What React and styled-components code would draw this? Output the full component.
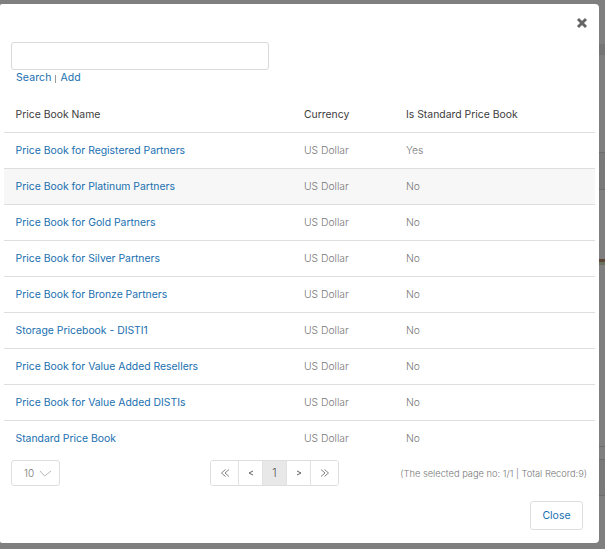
import React from 'react'
import styled, { createGlobalStyle } from 'styled-components'

const GlobalStyle = createGlobalStyle`
    html, body {
        margin: 0;
        padding: 0;
        background: #7f7f7f;
    }

    body {
        font-family: "Inter", "Liberation Sans", sans-serif;
    }
`

const Backdrop = styled.div`
    width: 605px;
    height: 549px;
    display: flex;
    background: #7f7f7f;
    overflow: hidden;
`

const ModalArea = styled.div`
    width: 599px;
    padding: 4px 0 6px;
    box-sizing: border-box;
`

// what shows of the page behind the dialog
const PageBehind = styled.div`
    width: 6px;
    display: flex;
    flex-direction: column;
`

const Band = styled.div`
    height: ${props => props.$height}px;
    background: ${props => props.$color};
`

const Modal = styled.div`
    position: relative;
    height: 539px;
    background: #ffffff;
    border-radius: 2px 4px 4px 2px;
    display: flex;
    flex-direction: column;
    padding: 38px 4px 0 4px;
    box-sizing: border-box;
`

const CloseIcon = styled.button`
    position: absolute;
    top: 13px;
    right: 11px;
    width: 12px;
    height: 12px;
    padding: 0;
    border: none;
    background: none;
    display: flex;
`

const SearchBlock = styled.div`
    padding-left: 7px;
    height: 55px;
`

const SearchInput = styled.input`
    display: block;
    box-sizing: border-box;
    width: 258px;
    height: 28px;
    border: 1px solid #d9d9d9;
    border-radius: 3px;
    background: #fff;
    margin: 0;
`

const SearchLinks = styled.div`
    display: flex;
    align-items: center;
    font-size: 10.5px;
    line-height: 14px;
    padding: 1px 0 0 5px;
    letter-spacing: 0.1px;
`

const Separator = styled.span`
    width: 1px;
    height: 8px;
    margin: 2px 4px 0 4px;
    background: #999;
`

const Link = styled.a`
    color: #1a6fb0;
    text-decoration: none;
`

const Table = styled.div`
    display: flex;
    flex-direction: column;
`

const Row = styled.div`
    display: grid;
    grid-template-columns: 288.5px 102px 1fr;
    height: 36px;
    box-sizing: border-box;
    align-items: center;
    padding-left: 11.5px;
    font-size: 10.3px;
    background: ${props => props.$striped ? '#f7f7f7' : '#fff'};
    border-bottom: 1px solid ${props => props.$last ? 'transparent' : '#dedede'};
`

const HeaderCell = styled.div`
    color: #3c3c3c;
    font-size: 10.4px;
`

const NameCell = styled(Link)`
    font-size: 10.4px;
`

const TextCell = styled.div`
    color: #777;
    font-weight: 300;
    padding-bottom: 2px;
`

const Footer = styled.div`
    display: grid;
    grid-template-columns: 199px 129px 1fr;
    align-items: center;
    height: 26px;
    margin-top: 3px;
    padding-left: 7px;
`

const PageSize = styled.div`
    width: 49px;
    height: 26px;
    box-sizing: border-box;
    border: 1px solid #dedede;
    border-radius: 3px;
    display: flex;
    align-items: center;
    gap: 5px;
    padding-left: 12px;
    font-size: 10px;
    font-weight: 300;
    color: #777;
`

const Pager = styled.div`
    display: flex;
    height: 26px;
    box-sizing: border-box;
    width: 129px;
    border: 1px solid #dedede;
    border-radius: 3px;
    overflow: hidden;
`

const PageItem = styled.div`
    width: ${props => props.$width}px;
    display: flex;
    align-items: center;
    justify-content: center;
    box-sizing: border-box;
    font-size: 11px;
    font-weight: 300;
    color: #555;
    background: ${props => props.$active ? '#e8e8e8' : '#fff'};
    border-right: ${props => props.$end ? 'none' : '1px solid #e2e2e2'};
`

const Summary = styled.div`
    font-size: 9.3px;
    font-weight: 300;
    color: #777;
    text-align: right;
    padding-right: 8px;
    white-space: nowrap;
`

const Actions = styled.div`
    display: flex;
    justify-content: flex-end;
    padding: 15px 12px 0 0;
`

const CloseButton = styled.button`
    width: 53px;
    height: 29px;
    box-sizing: border-box;
    background: #fff;
    border: 1px solid #dedede;
    border-radius: 3px;
    color: #1a6fb0;
    font-family: inherit;
    font-size: 10.5px;
    padding: 0;
`

const books = [
    { name: 'Price Book for Registered Partners', standard: 'Yes' },
    { name: 'Price Book for Platinum Partners', standard: 'No', striped: true },
    { name: 'Price Book for Gold Partners', standard: 'No' },
    { name: 'Price Book for Silver Partners', standard: 'No' },
    { name: 'Price Book for Bronze Partners', standard: 'No' },
    { name: 'Storage Pricebook - DISTI1', standard: 'No' },
    { name: 'Price Book for Value Added Resellers', standard: 'No' },
    { name: 'Price Book for Value Added DISTIs', standard: 'No' },
    { name: 'Standard Price Book', standard: 'No', last: true },
]

const bands = [
    [44, '#7f7f7f'], [11, '#757575'], [97, '#7f7f7f'], [1, '#6c6c6c'], [36, '#797979'], [1, '#6c6c6c'],
    [69, '#7f7f7f'], [3, '#5c4535'], [3, '#68705f'], [181, '#7f7f7f'], [1, '#6c6c6c'], [12, '#7f7f7f'],
    [1, '#6c6c6c'], [35, '#797979'], [1, '#6c6c6c'], [53, '#7f7f7f'],
]

function Chevron({ double, flip }) {
    return (
        <svg width="12" height="10" viewBox="0 0 12 10" style={{ transform: flip ? 'scaleX(-1)' : undefined }}>
            {double
                ? <path d="M6.5 1.5 L2.5 5 L6.5 8.5 M10 1.5 L6 5 L10 8.5" stroke="#666" strokeWidth="0.8" fill="none" />
                : <path d="M8 3 L4 5 L8 7" stroke="#555" strokeWidth="0.9" fill="none" />}
        </svg>
    )
}

export default function App() {
    return (
        <Backdrop>
            <GlobalStyle />
            <ModalArea>
                <Modal>
                    <CloseIcon aria-label="Close">
                        <svg width="12" height="12" viewBox="0 0 12 12">
                            <path d="M2 2 L10 10 M10 2 L2 10" stroke="#666" strokeWidth="3" />
                        </svg>
                    </CloseIcon>
                    <SearchBlock>
                        <SearchInput />
                        <SearchLinks>
                            <Link href="#">Search</Link>
                            <Separator />
                            <Link href="#">Add</Link>
                        </SearchLinks>
                    </SearchBlock>
                    <Table>
                        <Row>
                            <HeaderCell>Price Book Name</HeaderCell>
                            <HeaderCell>Currency</HeaderCell>
                            <HeaderCell>Is Standard Price Book</HeaderCell>
                        </Row>
                        {books.map(book => (
                            <Row key={book.name} $striped={book.striped} $last={book.last}>
                                <NameCell href="#">{book.name}</NameCell>
                                <TextCell>US Dollar</TextCell>
                                <TextCell>{book.standard}</TextCell>
                            </Row>
                        ))}
                    </Table>
                    <Footer>
                        <PageSize>
                            10
                            <svg width="13" height="7" viewBox="0 0 13 7">
                                <path d="M1 1 L5.5 6 L12 1" stroke="#999" strokeWidth="0.7" fill="none" />
                            </svg>
                        </PageSize>
                        <Pager>
                            <PageItem $width={28}><Chevron double /></PageItem>
                            <PageItem $width={24}><Chevron /></PageItem>
                            <PageItem $width={24} $active>1</PageItem>
                            <PageItem $width={24}><Chevron flip /></PageItem>
                            <PageItem $width={27} $end><Chevron double flip /></PageItem>
                        </Pager>
                        <Summary>(The selected page no: 1/1 | Total Record:9)</Summary>
                    </Footer>
                    <Actions>
                        <CloseButton>Close</CloseButton>
                    </Actions>
                </Modal>
            </ModalArea>
            <PageBehind>
                {bands.map(([height, color], index) => <Band key={index} $height={height} $color={color} />)}
            </PageBehind>
        </Backdrop>
    )
}
